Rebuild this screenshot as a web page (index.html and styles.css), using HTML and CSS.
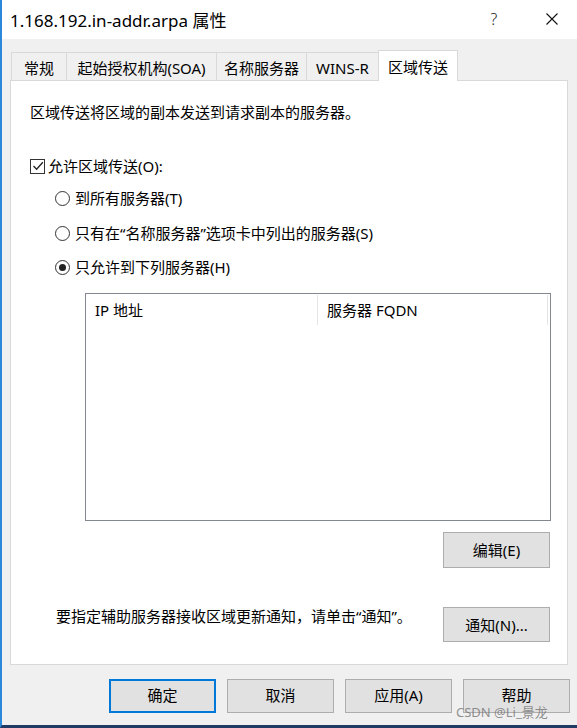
FILE: index.html
```html
<!DOCTYPE html>
<html lang="zh-CN">
<head>
<meta charset="utf-8">
<title>1.168.192.in-addr.arpa 属性</title>
<link rel="stylesheet" href="styles.css">
</head>
<body>
<div class="window">
  <div class="titlebar">
    <div class="title">1.168.192.in-addr.arpa 属性</div>
    <div class="title-help">?</div>
    <div class="title-close">
      <svg width="12" height="12" viewBox="0 0 12 12"><path d="M0.5 0.5 L11.5 11.5 M11.5 0.5 L0.5 11.5" stroke="#111" stroke-width="1.1" fill="none"/></svg>
    </div>
  </div>
  <div class="body">
    <div class="tabs">
      <div class="tab t1">常规</div>
      <div class="tab t2">起始授权机构(SOA)</div>
      <div class="tab t3">名称服务器</div>
      <div class="tab t4">WINS-R</div>
      <div class="tab active">区域传送</div>
    </div>
    <div class="panel">
      <div class="desc">区域传送将区域的副本发送到请求副本的服务器。</div>
      <div class="check-row">
        <span class="checkbox">
          <svg width="12" height="12" viewBox="0 0 12 12"><path d="M1.5 6 L4.6 9.2 L10.8 2.2" stroke="#222" stroke-width="1.3" fill="none"/></svg>
        </span>
        <span>允许区域传送(O):</span>
      </div>
      <div class="radio-row r1"><span class="radio"></span><span>到所有服务器(T)</span></div>
      <div class="radio-row r2"><span class="radio"></span><span>只有在“名称服务器”选项卡中列出的服务器(S)</span></div>
      <div class="radio-row r3"><span class="radio checked"></span><span>只允许到下列服务器(H)</span></div>
      <div class="list">
        <div class="list-head">
          <div class="col c1">IP 地址</div>
          <div class="col c2">服务器 FQDN</div>
        </div>
      </div>
      <div class="edit-row"><button class="btn">编辑(E)</button></div>
      <div class="notify-row">
        <div class="notify-text">要指定辅助服务器接收区域更新通知，请单击“通知”。</div>
        <button class="btn">通知(N)...</button>
      </div>
    </div>
    <div class="actions">
      <button class="btn btn-wide default">确定</button>
      <button class="btn btn-wide">取消</button>
      <button class="btn btn-wide">应用(A)</button>
      <button class="btn btn-wide">帮助</button>
    </div>
  </div>
  <div class="watermark">CSDN @Li_景龙</div>
</div>
</body>
</html>
```

FILE: styles.css
```css
* { box-sizing: border-box; }
html, body { margin: 0; padding: 0; }
body {
  font-family: "Segoe UI", "Noto Sans", "Noto Sans CJK SC", sans-serif;
  font-size: 15px;
  color: #000;
  background: #f0f0f0;
}
.window {
  position: relative;
  width: 577px;
  height: 728px;
  background: #f0f0f0;
  border-left: 2px solid #2b87da;
  border-bottom: 3px solid #1f3b63;
  display: flex;
  flex-direction: column;
  overflow: hidden;
}
.titlebar {
  height: 39px;
  background: #fff;
  display: flex;
  align-items: center;
  flex: none;
}
.title {
  flex: 1;
  padding-left: 8px;
  font-size: 17px;
  padding-bottom: 1px;
}
.title-help {
  width: 20px;
  margin-right: 42px;
  text-align: center;
  font-size: 16px;
  font-weight: 300;
  color: #222;
  padding-bottom: 2px;
}
.title-close {
  width: 12px;
  height: 12px;
  margin-right: 19px;
  display: flex;
  margin-top: -2px;
}
.body {
  flex: 1;
  padding: 11px 0 0 8px;
  display: flex;
  flex-direction: column;
}
.tabs {
  display: flex;
  align-items: flex-end;
  padding-left: 1px;
  height: 30px;
  position: relative;
  z-index: 1;
}
.tab {
  height: 28px;
  border: 1px solid #d9d9d9;
  border-bottom: none;
  background: #f0f0f0;
  display: flex;
  align-items: center;
  justify-content: center;
  padding-top: 2px;
  margin-right: -1px;
  white-space: nowrap;
}
.t1 { width: 56px; }
.t2 { width: 151px; }
.t3 { width: 91px; }
.t4 { width: 73px; }
.tab.active {
  width: 80px;
  height: 31px;
  background: #fff;
  margin-bottom: -1px;
  padding-top: 0;
}
.panel {
  width: 558px;
  height: 585px;
  background: #fff;
  border: 1px solid #d9d9d9;
  display: flex;
  flex-direction: column;
  flex: none;
}
.desc {
  line-height: 20px;
  margin: 21px 0 0 19px;
}
.check-row, .radio-row {
  display: flex;
  align-items: center;
  line-height: 20px;
}
.check-row {
  margin: 34px 0 0 19px;
  gap: 3px;
}
.checkbox {
  width: 15px;
  height: 15px;
  border: 1px solid #333;
  display: flex;
  align-items: center;
  justify-content: center;
  background: #fff;
}
.radio-row { margin-left: 44px; gap: 5px; }
.r1 { margin-top: 12px; }
.r2 { margin-top: 15px; }
.r3 { margin-top: 14px; }
.radio {
  width: 15px;
  height: 15px;
  border: 1px solid #333;
  border-radius: 50%;
  display: flex;
  align-items: center;
  justify-content: center;
  background: #fff;
}
.radio.checked::after {
  content: "";
  width: 7px;
  height: 7px;
  border-radius: 50%;
  background: #222;
}
.list {
  margin: 16px 0 0 74px;
  width: 466px;
  height: 228px;
  border: 1px solid #828790;
  background: #fff;
}
.list-head {
  display: flex;
  height: 31px;
  padding-top: 1px;
}
.col {
  display: flex;
  align-items: center;
  padding-left: 9px;
  border-right: 1px solid #e5e5e5;
  padding-bottom: 2px;
}
.c1 { width: 232px; }
.c2 { width: 230px; }
.edit-row {
  display: flex;
  justify-content: flex-end;
  padding-right: 17px;
  margin-top: 11px;
}
.btn {
  font-family: inherit;
  font-size: 15px;
  line-height: 16px;
  color: #000;
  background: #e1e1e1;
  border: 1px solid #adadad;
  width: 107px;
  height: 36px;
  padding: 0;
  margin: 0;
}
.notify-row {
  display: flex;
  align-items: flex-start;
  justify-content: space-between;
  padding: 0 17px 0 45px;
  margin-top: 39px;
}
.notify-text {
  line-height: 20px;
  margin-top: -1px;
}
.notify-row .btn { height: 35px; }
.actions {
  display: flex;
  gap: 11px;
  padding-left: 99px;
  margin-top: 14px;
}
.btn-wide { width: 107px; height: 34px; padding-bottom: 2px; }
.btn.default { border: 2px solid #0078d7; }
.watermark {
  position: absolute;
  left: 454px;
  top: 705px;
  font-size: 13px;
  color: rgba(110, 110, 110, 0.75);
  font-family: "Noto Sans", "Noto Sans CJK SC", sans-serif;
  line-height: 14px;
}
```
